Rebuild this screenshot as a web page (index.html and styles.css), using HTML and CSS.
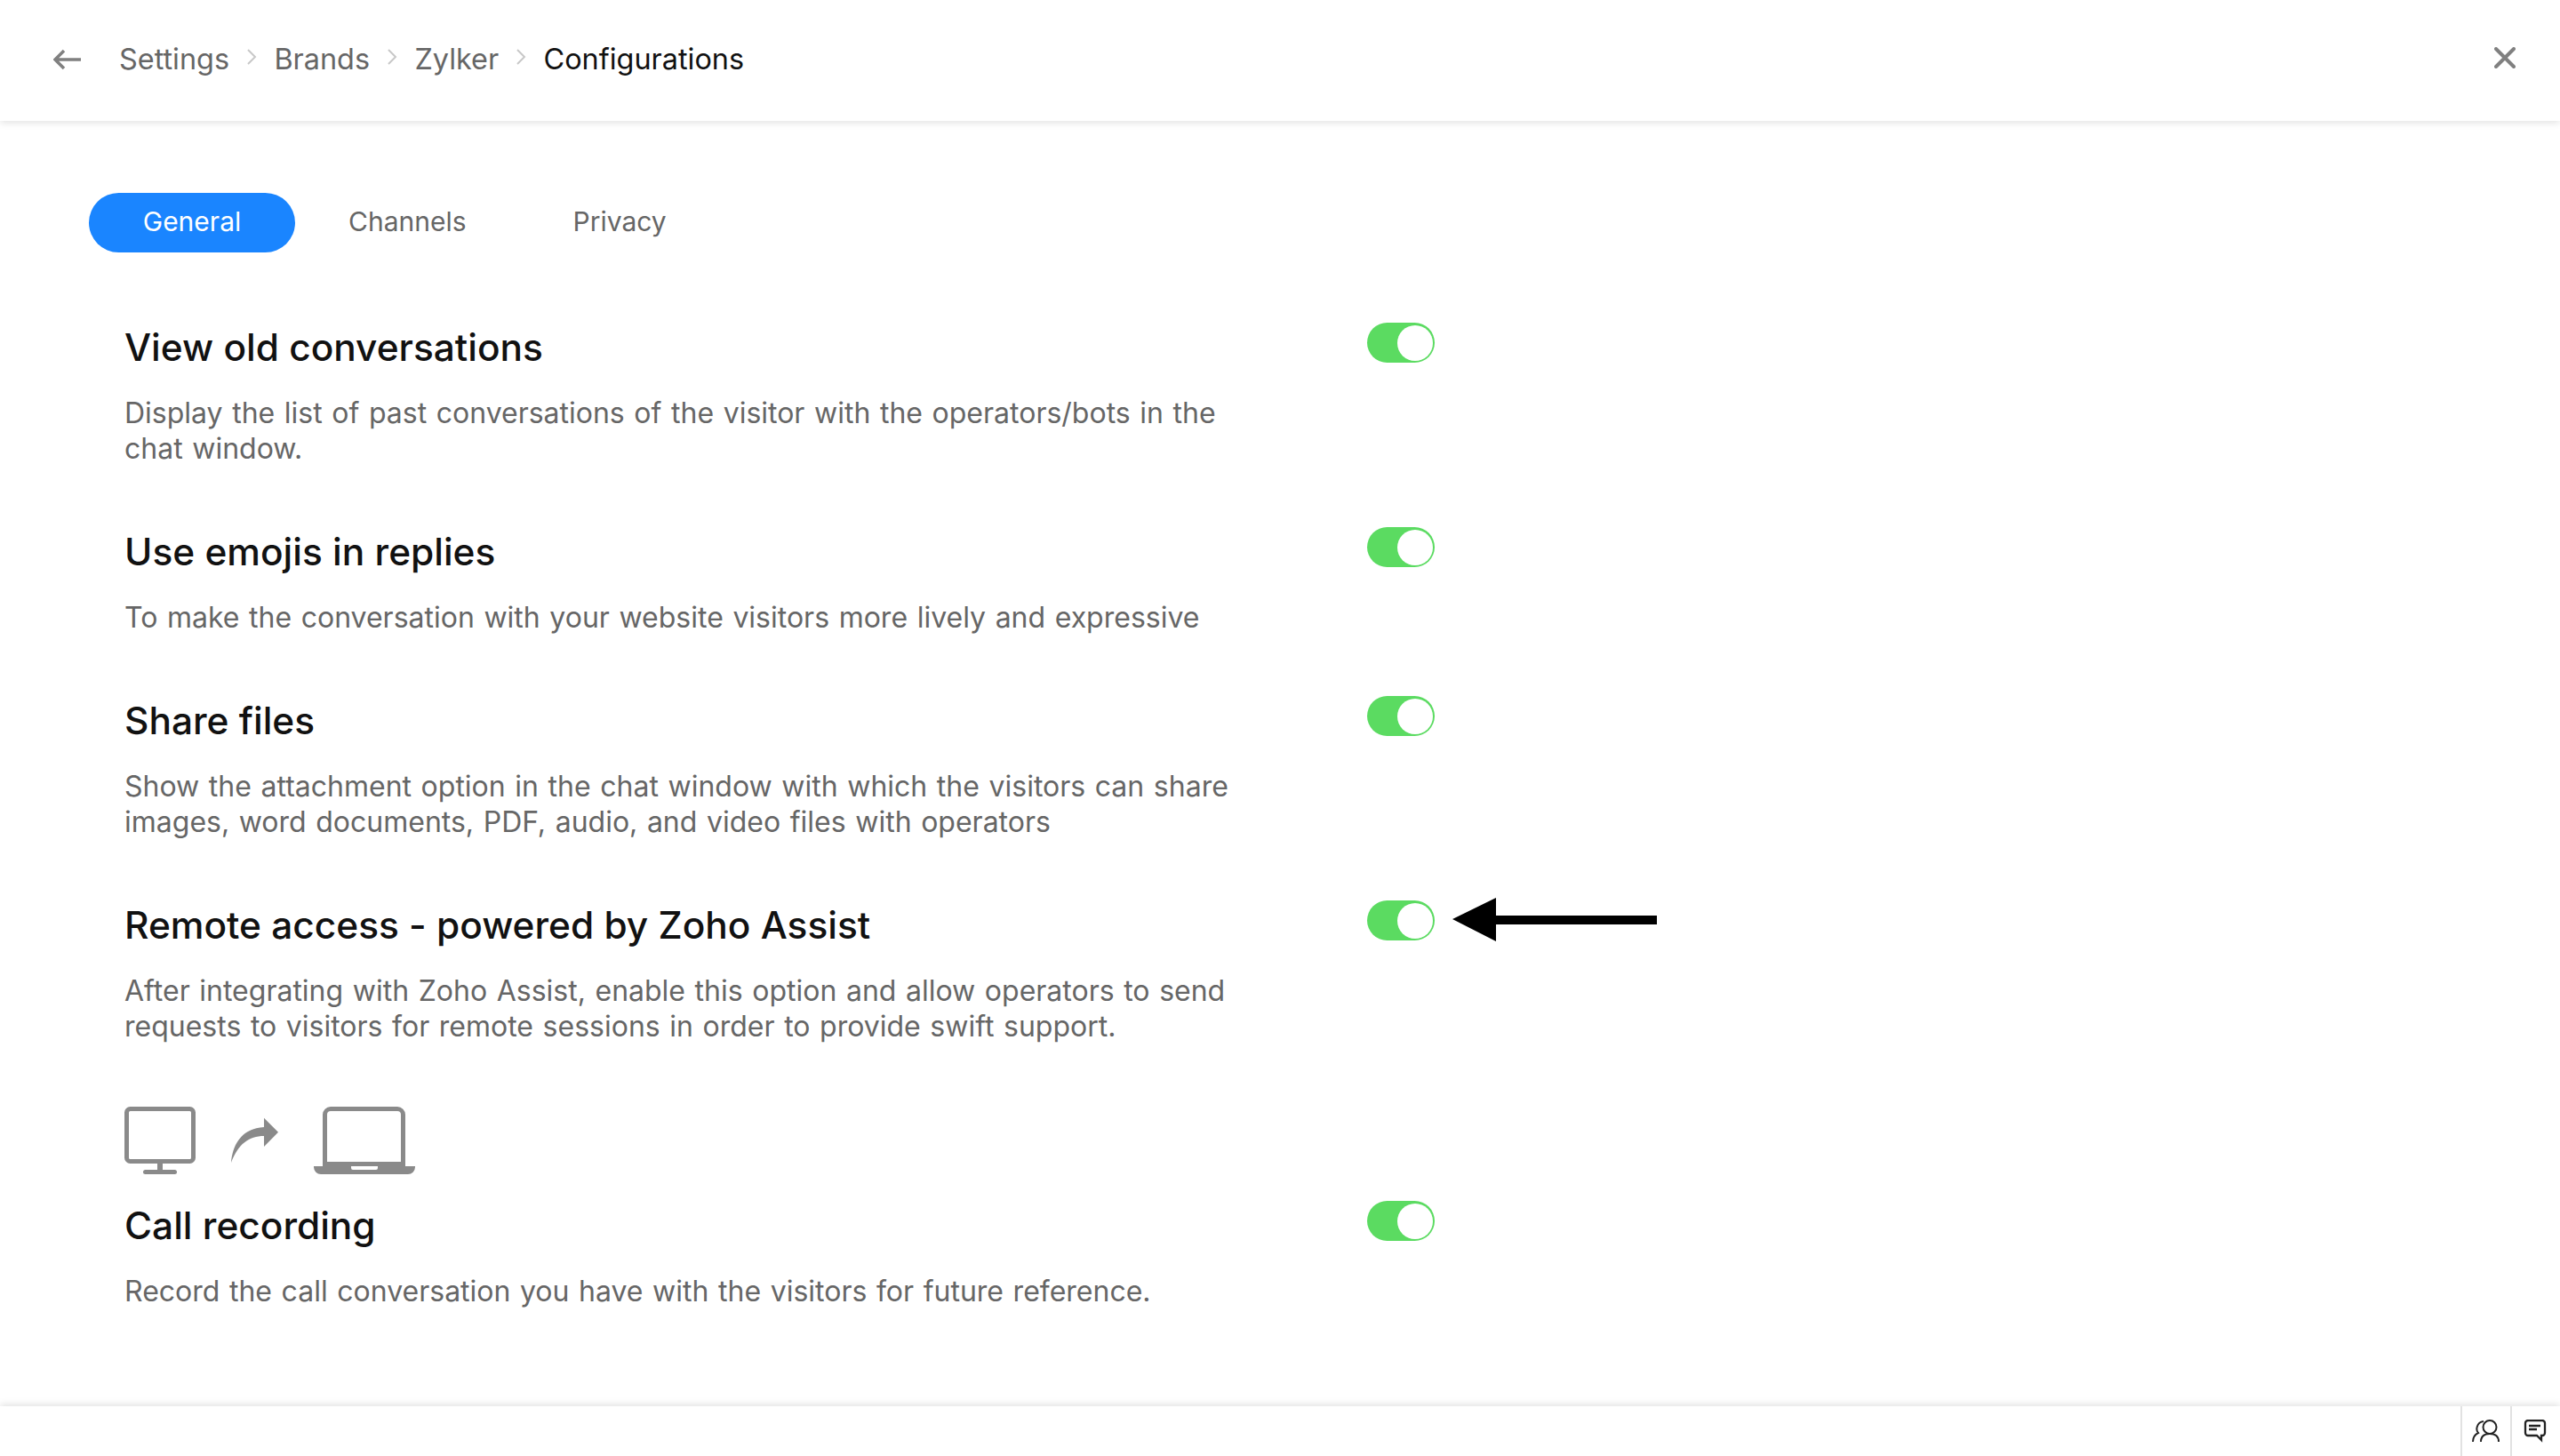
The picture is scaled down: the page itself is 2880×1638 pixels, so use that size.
FILE: index.html

```html
<!DOCTYPE html>
<html>
<head>
    <meta charset="utf-8">
    <title>Configurations</title>
    <link rel="stylesheet" href="styles.css">
</head>
<body>
    <div class="header">
        <svg class="back-icon" viewBox="0 0 32 24"><path d="M31 12H2M12 2 2 12l10 10"/></svg>
        <div class="crumbs">
            <span>Settings</span>
            <svg class="chevron" viewBox="0 0 12 20"><path d="M2 2l8 8-8 8"/></svg>
            <span>Brands</span>
            <svg class="chevron" viewBox="0 0 12 20"><path d="M2 2l8 8-8 8"/></svg>
            <span>Zylker</span>
            <svg class="chevron" viewBox="0 0 12 20"><path d="M2 2l8 8-8 8"/></svg>
            <span class="current">Configurations</span>
        </div>
        <svg class="close-icon" viewBox="0 0 24 24"><path d="M2 2l20 20M22 2 2 22"/></svg>
    </div>

    <div class="main">
        <div class="tabs">
            <div class="tab active">General</div>
            <div class="tab">Channels</div>
            <div class="tab">Privacy</div>
        </div>

        <div class="row">
            <div class="row-text">
                <h3>View old conversations</h3>
                <p>Display the list of past conversations of the visitor with the operators/bots in the chat window.</p>
            </div>
            <div class="toggle"><span class="knob"></span></div>
        </div>

        <div class="row">
            <div class="row-text">
                <h3>Use emojis in replies</h3>
                <p>To make the conversation with your website visitors more lively and expressive</p>
            </div>
            <div class="toggle"><span class="knob"></span></div>
        </div>

        <div class="row">
            <div class="row-text">
                <h3>Share files</h3>
                <p>Show the attachment option in the chat window with which the visitors can share images, word documents, PDF, audio, and video files with operators</p>
            </div>
            <div class="toggle"><span class="knob"></span></div>
        </div>

        <div class="row">
            <div class="row-text">
                <h3>Remote access - powered by Zoho Assist</h3>
                <p>After integrating with Zoho Assist, enable this option and allow operators to send requests to visitors for remote sessions in order to provide swift support.</p>
            </div>
            <div class="toggle">
                <span class="knob"></span>
                <svg class="pointer" viewBox="0 0 230 49"><path d="M0 24 49 0v20h181v10H49v19z"/></svg>
            </div>
        </div>

        <svg class="remote-icons" viewBox="0 0 327 76">
            <rect class="outline" x="2.5" y="2.5" width="75" height="59" rx="4"/>
            <rect x="37" y="64" width="6" height="8"/>
            <rect x="21" y="71" width="38" height="5" rx="2.5"/>
            <path d="M120 63C122 38 136 24 157 23V12.7L173 28.7 157 45V33C140 33 128 42 120 63Z"/>
            <path class="outline" d="M225.500 67V9a6.500 6.500 0 0 1 6.500-6.500h75a6.500 6.500 0 0 1 6.500 6.500v58M225.500 64.500h88"/>
            <path d="M213 67h42v2a2 2 0 0 0 2 2h26a2 2 0 0 0 2-2v-2h42v1a8 8 0 0 1-8 8H221a8 8 0 0 1-8-8z"/>
        </svg>

        <div class="row">
            <div class="row-text">
                <h3>Call recording</h3>
                <p>Record the call conversation you have with the visitors for future reference.</p>
            </div>
            <div class="toggle"><span class="knob"></span></div>
        </div>
    </div>

    <div class="footer">
        <div class="footer-btn">
            <svg viewBox="0 0 32 26"><path d="M1 25c0-5 2-8 6-10-3-3-2-12 6-13M10 25c0-6 4-9 10-9s10 3 10 9M20 16a7.500 7.500 0 1 0 0-15 7.500 7.500 0 0 0 0 15z"/></svg>
        </div>
        <div class="footer-btn">
            <svg class="chat-icon" viewBox="0 0 26 26"><path d="M4 1h16a3 3 0 0 1 3 3v11a3 3 0 0 1-3 3h-1v5l-5-5H4a3 3 0 0 1-3-3V4a3 3 0 0 1 3-3zM5 7h13M5 11h9"/></svg>
        </div>
    </div>
</body>
</html>
```

FILE: styles.css

```css
* {
    box-sizing: border-box;
}
body {
    margin: 0;
    height: 1638px;
    display: flex;
    flex-direction: column;
    font-family: Inter, "Liberation Sans", sans-serif;
    background-color: #fff;
    overflow: hidden;
}
.header {
    height: 136px;
    display: flex;
    align-items: center;
    padding: 0 50px 3px 60px;
    box-shadow: 0 2px 8px rgba(0, 0, 0, 0.12);
}
.back-icon {
    width: 32px;
    height: 24px;
    fill: none;
    stroke: #808080;
    stroke-width: 3.5;
}
.crumbs {
    display: flex;
    align-items: center;
    margin-left: 42px;
    font-size: 32.4px;
    color: #666;
}
.crumbs .current {
    color: #111;
}
.chevron {
    width: 12px;
    height: 20px;
    margin: -6px 19.2px 0 19.2px;
    fill: none;
    stroke: #c8c8c8;
    stroke-width: 2;
}
.close-icon {
    width: 24px;
    height: 24px;
    margin: 0 0 3px auto;
    fill: none;
    stroke: #808080;
    stroke-width: 4;
    stroke-linecap: round;
}
.main {
    flex: 1;
    padding: 81px 0 0 100px;
}
.tabs {
    display: flex;
    margin-bottom: 81px;
}
.tab {
    width: 232px;
    height: 67px;
    line-height: 65px;
    border-radius: 34px;
    text-align: center;
    font-size: 30px;
    color: #666;
}
.tab + .tab {
    width: auto;
    padding: 0 60px;
}
.tab.active {
    background-color: #1a85ff;
    color: #fff;
}
.row {
    display: flex;
    align-items: flex-start;
    padding-left: 40px;
    margin-bottom: 70px;
}
.row-text {
    width: 1398px;
}
.row-text h3 {
    margin: 0 0 28px 0;
    font-size: 42.4px;
    line-height: 52px;
    font-weight: 500;
    color: #111;
}
.row-text p {
    width: 1270px;
    margin: 0;
    font-size: 32px;
    word-spacing: 1.6px;
    line-height: 40px;
    color: #666;
}
.toggle {
    position: relative;
    width: 76px;
    height: 45px;
    margin-top: -2px;
    flex-shrink: 0;
    border-radius: 23px;
    background-color: #5bdb61;
}
.knob {
    position: absolute;
    top: 3px;
    right: 2px;
    width: 40px;
    height: 40px;
    border-radius: 50%;
    background-color: #fff;
}
.pointer {
    position: absolute;
    left: 96px;
    top: -3px;
    width: 230px;
    height: 49px;
}
.remote-icons {
    display: block;
    width: 327px;
    height: 76px;
    margin: 1px 0 32px 40px;
    fill: #8a8a8a;
}
.remote-icons .outline {
    fill: none;
    stroke: #8a8a8a;
    stroke-width: 5;
}
.footer {
    height: 56px;
    display: flex;
    justify-content: flex-end;
    box-shadow: 0 -2px 8px rgba(0, 0, 0, 0.12);
}
.footer-btn {
    width: 56px;
    display: flex;
    align-items: center;
    justify-content: center;
    border-left: 2px solid #e2e2e2;
}
.footer-btn svg {
    width: 32px;
    height: 26px;
    fill: none;
    stroke: #222;
    stroke-width: 2;
}
.footer-btn .chat-icon {
    stroke-width: 2.3;
}
```
